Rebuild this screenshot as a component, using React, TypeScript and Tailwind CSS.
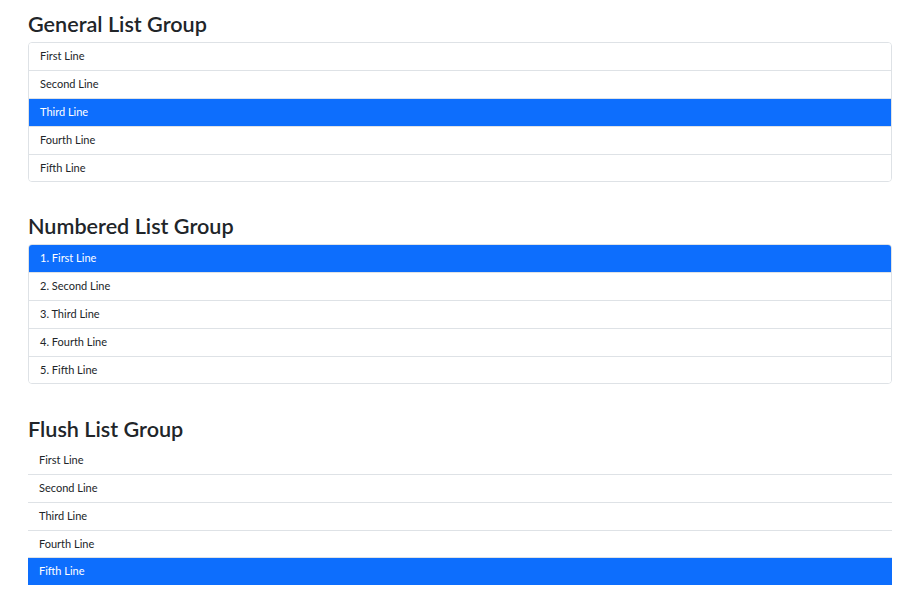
const lines = ['First Line', 'Second Line', 'Third Line', 'Fourth Line', 'Fifth Line']

function Heading({ children }: { children: string }) {
  return (
    <h2 className="text-[21.6px] leading-[30px] font-semibold text-[#212529] mb-[3px]">{children}</h2>
  )
}

function ListGroup({ items, active, flush }: { items: string[]; active: number; flush?: boolean }) {
  const last = items.length - 1
  return (
    <ul className={flush ? '' : 'border border-[#dee2e6] rounded-[4px] overflow-hidden'}>
      {items.map((text, i) => {
        const isActive = i === active
        let divider = ''
        if (flush) divider = i < last ? 'border-b border-[#dee2e6]' : ''
        else divider = i > 0 ? 'border-t border-[#dee2e6]' : ''
        let height = 'h-[28px]'
        if (flush && i >= last - 1) height = 'h-[27px]'
        if (!flush && (i === 0 || i === last)) height = 'h-[27px]'
        return (
          <li
            key={i}
            className={`${height} flex items-center px-[11px] text-[11px] ${divider} ${
              isActive ? 'bg-[#0d6efd] text-white border-[#0d6efd]' : 'bg-white text-[#212529]'
            }`}
          >
            {text}
          </li>
        )
      })}
    </ul>
  )
}

export default function App() {
  return (
    <div className="min-h-screen bg-white pl-[28px] pr-[31px] pt-[9px]" style={{ fontFamily: 'Lato, "Open Sans", sans-serif' }}>
      <section>
        <Heading>General List Group</Heading>
        <ListGroup items={lines} active={2} />
      </section>
      <section className="mt-[29px]">
        <Heading>Numbered List Group</Heading>
        <ListGroup items={lines.map((l, i) => `${i + 1}. ${l}`)} active={0} />
      </section>
      <section className="mt-[30px]">
        <Heading>Flush List Group</Heading>
        <ListGroup items={lines} active={4} flush />
      </section>
    </div>
  )
}
